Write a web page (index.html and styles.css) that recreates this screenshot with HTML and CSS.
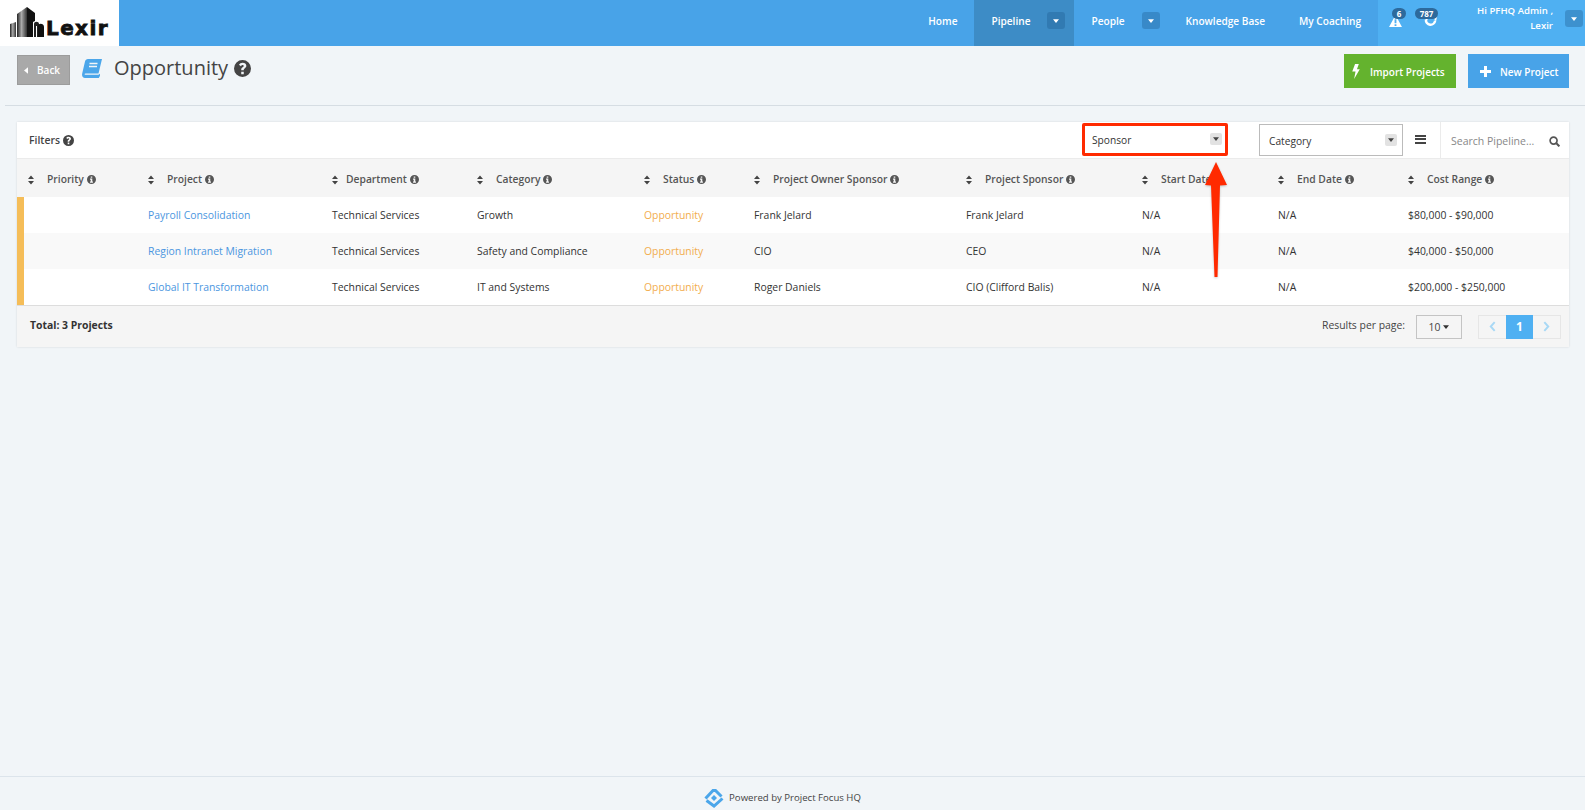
FILE: index.html
```html
<!DOCTYPE html>
<html lang="en">
<head>
<meta charset="utf-8">
<title>Opportunity</title>
<link rel="stylesheet" href="styles.css">
</head>
<body>
<svg class="defs" width="0" height="0" aria-hidden="true">
  <symbol id="i-sort" viewBox="0 0 8 12"><path d="M4 .5 7.6 4.8H.4zM4 11.500.4 7.200h7.200z"/></symbol>
  <symbol id="i-info" viewBox="0 0 16 16"><path fill-rule="evenodd" d="M8 0a8 8 0 1 0 0 16A8 8 0 0 0 8 0zM6.600 2.600h2.800v2.400H6.600zM5.400 6.400h4v5.200h1.200v2H5.400v-2h1.200V8.400H5.400z"/></symbol>
  <symbol id="i-help" viewBox="0 0 16 16"><path fill-rule="evenodd" d="M8 0a8 8 0 1 0 0 16A8 8 0 0 0 8 0zM6.800 11h2.400v2.400H6.800zM8.100 2.600c2 0 3.500 1.100 3.500 2.900 0 1.300-.7 1.900-1.500 2.400-.7.400-.9.700-.9 1.400v.4H6.800v-.6c0-1.200.5-1.800 1.300-2.300.6-.4 1-.6 1-1.200 0-.5-.4-.8-1-.8-.7 0-1.200.4-1.600 1L4.700 4.500c.7-1.200 1.800-1.900 3.400-1.900z"/></symbol>
  <symbol id="i-caret" viewBox="0 0 8 5"><path d="M0 0h8L4 5z"/></symbol>
</svg>

<header class="topnav">
  <a class="brand">
    <svg class="brand-mark" viewBox="0 0 34 31">
      <defs>
        <linearGradient id="tower" x1="0" x2="1" y1="0" y2="0"><stop offset="0" stop-color="#222"/><stop offset=".45" stop-color="#aaa"/><stop offset="1" stop-color="#333"/></linearGradient>
      </defs>
      <path fill="url(#tower)" d="M0 18l6-2v15H0z"/>
      <path fill="url(#tower)" d="M7 8 17 1v30H7z"/>
      <path fill="#111" d="M17 1l8 6v8l-2 1v15h-6z"/>
      <path fill="#222" d="M24 18c0-3 5-3 5 0v13h-2V20h-1v11h-2z"/>
      <path fill="#111" d="M28 20c0-3 6-3 6 1v10h-6z"/>
    </svg>
    <span class="brand-name">Lexir</span>
  </a>
  <nav class="nav-items">
    <a class="nav-item">Home</a>
    <a class="nav-item has-toggle is-active">Pipeline<span class="nav-toggle"><svg class="caret-sm"><use href="#i-caret"/></svg></span></a>
    <a class="nav-item has-toggle">People<span class="nav-toggle"><svg class="caret-sm"><use href="#i-caret"/></svg></span></a>
    <a class="nav-item">Knowledge Base</a>
    <a class="nav-item">My Coaching</a>
  </nav>
  <div class="nav-user">
    <span class="alert">
      <svg class="alert-icon" viewBox="0 0 14 13"><path fill="#fff" fill-rule="evenodd" d="M7 0l7 13H0zM6 4.500v4.500h2V4.500zM6 10v2h2v-2z"/></svg>
      <span class="badge badge-one">6</span>
    </span>
    <span class="alert alert-wide">
      <svg class="alert-icon" viewBox="0 0 14 13"><path fill="none" stroke="#fff" stroke-width="2.600" d="M2 5a5 5 0 0 0 10 1"/><path fill="#fff" d="M0 2l5 0-2 5zM14 2l-4 1 3 4z"/></svg>
      <span class="badge badge-two">787</span>
    </span>
    <div class="greeting">Hi PFHQ Admin ,<br>Lexir</div>
    <span class="nav-toggle nav-toggle-user"><svg class="caret-sm"><use href="#i-caret"/></svg></span>
  </div>
</header>

<section class="page-head">
  <div class="head-left">
    <a class="btn-back"><svg class="back-arrow" viewBox="0 0 5 8"><path d="M5 0v8L0 4z"/></svg>Back</a>
    <svg class="book" viewBox="0 0 20 19"><path fill="#4ba6ea" d="M6 0h14l-3.500 14.500H3.500c-1 0-1.300 1.300-.3 1.300H16.500l1.500-1v2L16.800 19H3C.7 19-.4 17 .2 14.500L3 2.500C3.300 1 4.500 0 6 0z"/><path fill="none" stroke="#f1f5f8" stroke-width="1.300" d="M7.500 4.500h8M7 7.500h8"/></svg>
    <h1 class="page-title">Opportunity</h1>
    <svg class="title-help"><use href="#i-help"/></svg>
  </div>
  <div class="head-actions">
    <a class="btn btn-green"><svg class="btn-icon bolt" viewBox="0 0 8 16"><path fill="#fff" d="M3 0h4L5 5.500h3L2 16l1.500-8H0z"/></svg>Import Projects</a>
    <a class="btn btn-blue"><svg class="btn-icon plus" viewBox="0 0 11 11"><path fill="#fff" d="M4 0h3v4h4v3H7v4H4V7H0V4h4z"/></svg>New Project</a>
  </div>
</section>

<main class="card">
  <div class="filters">
    <span class="filters-label">Filters<svg class="filters-help"><use href="#i-help"/></svg></span>
    <div class="select select-flagged"><span>Sponsor</span><span class="select-arrow"><svg class="caret-dark"><use href="#i-caret"/></svg></span></div>
    <div class="select select-plain"><span>Category</span><span class="select-arrow"><svg class="caret-dark"><use href="#i-caret"/></svg></span></div>
    <span class="menu-lines"></span>
    <div class="search">
      <span class="search-text">Search Pipeline...</span>
      <svg class="search-icon" viewBox="0 0 12 12"><circle cx="5" cy="5" r="3.800" fill="none" stroke="#555" stroke-width="1.800"/><path stroke="#555" stroke-width="2.200" d="M8 8l3.300 3.300"/></svg>
    </div>
  </div>

  <table class="grid">
    <colgroup>
      <col class="c1"><col class="c2"><col class="c3"><col class="c4"><col class="c5"><col class="c6"><col class="c7"><col class="c8"><col class="c9"><col class="c10">
    </colgroup>
    <thead>
      <tr>
        <th class="first"><svg class="sort"><use href="#i-sort"/></svg><span class="th-label">Priority</span><svg class="info"><use href="#i-info"/></svg></th>
        <th><svg class="sort"><use href="#i-sort"/></svg><span class="th-label">Project</span><svg class="info"><use href="#i-info"/></svg></th>
        <th><svg class="sort"><use href="#i-sort"/></svg><span class="th-label tight">Department</span><svg class="info"><use href="#i-info"/></svg></th>
        <th><svg class="sort"><use href="#i-sort"/></svg><span class="th-label">Category</span><svg class="info"><use href="#i-info"/></svg></th>
        <th><svg class="sort"><use href="#i-sort"/></svg><span class="th-label">Status</span><svg class="info"><use href="#i-info"/></svg></th>
        <th><svg class="sort"><use href="#i-sort"/></svg><span class="th-label">Project Owner Sponsor</span><svg class="info"><use href="#i-info"/></svg></th>
        <th><svg class="sort"><use href="#i-sort"/></svg><span class="th-label">Project Sponsor</span><svg class="info"><use href="#i-info"/></svg></th>
        <th><svg class="sort"><use href="#i-sort"/></svg><span class="th-label">Start Date</span><svg class="info"><use href="#i-info"/></svg></th>
        <th><svg class="sort"><use href="#i-sort"/></svg><span class="th-label">End Date</span><svg class="info"><use href="#i-info"/></svg></th>
        <th><svg class="sort"><use href="#i-sort"/></svg><span class="th-label">Cost Range</span><svg class="info"><use href="#i-info"/></svg></th>
      </tr>
    </thead>
    <tbody>
      <tr>
        <td class="bar"></td><td><a class="link">Payroll Consolidation</a></td><td>Technical Services</td><td>Growth</td><td class="status">Opportunity</td><td>Frank Jelard</td><td>Frank Jelard</td><td>N/A</td><td>N/A</td><td>$80,000 - $90,000</td>
      </tr>
      <tr>
        <td class="bar"></td><td><a class="link">Region Intranet Migration</a></td><td>Technical Services</td><td>Safety and Compliance</td><td class="status">Opportunity</td><td>CIO</td><td>CEO</td><td>N/A</td><td>N/A</td><td>$40,000 - $50,000</td>
      </tr>
      <tr>
        <td class="bar"></td><td><a class="link">Global IT Transformation</a></td><td>Technical Services</td><td>IT and Systems</td><td class="status">Opportunity</td><td>Roger Daniels</td><td>CIO (Clifford Balis)</td><td>N/A</td><td>N/A</td><td>$200,000 - $250,000</td>
      </tr>
    </tbody>
  </table>

  <div class="card-foot">
    <strong class="total">Total: 3 Projects</strong>
    <span class="per-page">Results per page:</span>
    <span class="per-select">10<svg class="caret-xs"><use href="#i-caret"/></svg></span>
    <div class="pager">
      <span class="page-btn"><svg class="chev" viewBox="0 0 8 12"><path d="M6.500 1 2 6l4.500 5"/></svg></span>
      <span class="page-btn is-current">1</span>
      <span class="page-btn"><svg class="chev" viewBox="0 0 8 12"><path d="M1.500 1 6 6l-4.500 5"/></svg></span>
    </div>
  </div>
</main>

<footer class="page-foot">
  <svg class="foot-logo" viewBox="0 0 20 20"><g fill="none" stroke="#4ba6ea" stroke-width="3"><path d="M1.500 10.500 9 2.500h2.500l6 6"/><path d="M2.500 12.500l7.500 5.500 8.500-7.500"/></g><path fill="#4ba6ea" d="M10 7l3 3-3 3-3-3z"/></svg>
  <span>Powered by Project Focus HQ</span>
</footer>

<svg class="arrow" viewBox="0 0 30 122"><path fill="#ff2a00" d="M15 1 26 24l-7 .5L16.500 116h-3L10 24.500 4 24z"/></svg>
</body>
</html>
```

FILE: styles.css
```css
* { box-sizing: border-box; }
html, body { height: 100%; }
body {
  margin: 0;
  min-height: 810px;
  display: flex;
  flex-direction: column;
  position: relative;
  overflow: hidden;
  background: #f1f5f8;
  color: #333;
  font-family: "Open Sans", "Liberation Sans", sans-serif;
  font-size: 10.4px;
}
a { color: inherit; text-decoration: none; }
.defs { position: absolute; }

/* top navigation */
.topnav { display: flex; height: 46px; background: #48a3e8; color: #fff; font-weight: 600; font-size: 10.1px; flex: none; }
.brand { width: 119px; background: #fff; display: flex; align-items: flex-end; padding: 0 0 9px 10px; }
.brand-mark { width: 34px; height: 31px; display: block; }
.brand-name {
  font-family: "DejaVu Sans", sans-serif;
  font-weight: 700;
  font-size: 20px;
  line-height: 17px;
  letter-spacing: 1.400px;
  color: #111;
  -webkit-text-stroke: .8px #111;
  margin-left: 2px;
}
.nav-items { display: flex; margin-left: auto; }
.nav-item { display: flex; align-items: flex-start; padding: 14px 17px 0; }
.nav-item.has-toggle { padding-right: 9px; }
.nav-item.is-active { background: #3d8cc6; }
.nav-toggle {
  width: 18px; height: 17px; margin: -2px 0 0 17px; border-radius: 3px;
  background: rgba(30, 90, 140, .35);
  display: flex; align-items: center; justify-content: center;
}
.caret-sm { width: 6px; height: 4px; fill: #fff; }
.nav-user { width: 207px; flex: none; background: #4fb0f2; display: flex; position: relative; align-items: flex-start; }
.alert { position: relative; width: 14px; height: 13px; margin: 15px 0 0 11px; }
.alert-wide { margin-left: 21px; }
.alert-icon { width: 13px; height: 12px; display: block; }
.badge {
  position: absolute; top: -7px; height: 11px; border-radius: 6px;
  background: #2d6a9c; color: #fff; font-size: 8px; line-height: 11px; font-weight: 700; text-align: center;
}
.badge-one { left: 3px; width: 14px; }
.badge-two { left: -9px; width: 23px; }
.greeting { position: absolute; right: 32px; top: 4px; text-align: right; line-height: 14.500px; font-size: 9.600px; }
.nav-toggle-user { position: absolute; right: 2px; top: 10px; margin: 0; width: 18px; }

/* page header */
.page-head {
  display: flex; justify-content: space-between; align-items: flex-start;
  margin-left: 5px; padding: 8px 16px 17px 12px;
  border-bottom: 1px solid #d6dde3; flex: none;
}
.head-left { display: flex; align-items: center; height: 30px; margin-top: 1px; }
.btn-back {
  width: 53px; height: 30px; background: #a9a9a9; border: 1px solid #9c9c9c; color: #fff; font-weight: 600; font-size: 10px;
  display: flex; align-items: center; padding-left: 6px;
}
.back-arrow { width: 4px; height: 7px; fill: #fff; margin-right: 9px; }
.book { width: 20px; height: 19px; margin: 0 0 4px 12px; }
.page-title { margin: 0 0 4px 12px; font-size: 20px; font-weight: 400; color: #444; line-height: 30px; }
.title-help { width: 17px; height: 17px; margin: 0 0 4px 6px; fill: #444; }
.head-actions { display: flex; gap: 12px; }
.btn { height: 34px; color: #fff; font-weight: 600; font-size: 10px; display: flex; align-items: center; padding-top: 1px; }
.btn-green { width: 112px; background: #64b32e; padding-left: 8px; }
.btn-blue { width: 101px; background: #48a3e8; padding-left: 12px; }
.btn-icon { flex: none; }
.bolt { width: 8px; height: 15px; margin-right: 10px; }
.plus { width: 11px; height: 11px; margin-right: 9px; }

/* card */
.card { margin: 16px 16px 0 17px; background: #fff; box-shadow: 0 0 2px rgba(0, 0, 0, .12); flex: none; }
.filters { display: flex; align-items: center; height: 37px; border-bottom: 1px solid #ebebeb; }
.filters-label { display: flex; align-items: center; padding-left: 12px; font-weight: 600; color: #444; margin: 0 auto 0 0; }
.filters-help { width: 11px; height: 11px; fill: #444; margin-left: 3px; }
.select { display: flex; align-items: center; justify-content: space-between; font-size: 10.200px; }
.select > span:first-child { padding-top: 2px; }
.select-flagged { width: 146px; height: 33px; border: 3px solid #ff2a00; border-radius: 2px; padding: 0 3px 0 7px; margin-top: -2px; }
.select-plain { width: 144px; height: 32px; border: 1px solid #bbb; margin-left: 31px; padding: 0 5px 0 9px; }
.select-arrow { width: 12px; height: 12px; border-radius: 2px; background: #e2e2e2; display: flex; align-items: center; justify-content: center; }
.caret-dark { width: 6px; height: 4px; fill: #444; }
.menu-lines { width: 11px; height: 9px; margin: -2px 0 0 12px; border-top: 2px solid #444; border-bottom: 2px solid #444; position: relative; }
.menu-lines::after { content: ""; position: absolute; left: 0; right: 0; top: 1.500px; height: 2px; background: #444; }
.search { width: 129px; height: 36px; margin-left: 14px; border-left: 1px solid #ebebeb; display: flex; align-items: center; justify-content: space-between; padding: 2px 9px 0 10px; }
.search-text { color: #888; font-size: 10.500px; }
.search-icon { width: 11px; height: 11px; }

/* table */
.grid { width: 1552px; table-layout: fixed; border-collapse: separate; border-spacing: 0; }
.c1 { width: 131px; } .c2 { width: 184px; } .c3 { width: 145px; } .c4 { width: 167px; } .c5 { width: 110px; }
.c6 { width: 212px; } .c7 { width: 176px; } .c8 { width: 136px; } .c9 { width: 130px; } .c10 { width: 161px; }
th { height: 38px; padding: 2px 0 0; background: #f5f5f5; text-align: left; font-weight: 600; color: #555; font-size: 10.300px; white-space: nowrap; }
th.first { padding-left: 11px; }
.sort { width: 8px; height: 10px; margin-left: -1px; fill: #444; vertical-align: -1.500px; }
.th-label { margin-left: 12px; }
.th-label.tight { margin-left: 7px; }
.info { width: 9px; height: 9px; fill: #555; margin-left: 3px; vertical-align: -1px; }
td { height: 36px; padding: 0; white-space: nowrap; color: #333; }
tbody tr:nth-child(even) td { background: #f9f9f9; }
tbody td.bar { background: inherit; border-left: 7px solid #f5bd58; }
.link { color: #4b96e0; }
td.status { color: #f2ad4e; }

/* card footer */
.card-foot { display: flex; align-items: center; height: 42px; background: #f5f5f5; border-top: 1px solid #ddd; padding: 0 8px 0 13px; }
.total { font-weight: 700; color: #333; margin: 0 auto 3px 0; }
.per-page { color: #444; margin: 0 11px 3px 0; }
.per-select { width: 46px; height: 24px; border: 1px solid #c4c4c4; display: flex; align-items: center; justify-content: center; color: #444; margin-right: 16px; }
.caret-xs { width: 6px; height: 4px; fill: #333; margin-left: 3px; }
.pager { display: flex; height: 24px; border: 1px solid #e6e6e6; width: 83px; }
.page-btn { flex: 1; display: flex; align-items: center; justify-content: center; }
.page-btn.is-current { flex: none; width: 27px; margin: -1px 0; background: #4fb0f2; color: #fff; font-weight: 700; font-size: 12px; }
.chev { width: 7px; height: 11px; fill: none; stroke: #a8d8f5; stroke-width: 2.200; }

/* page footer */
.page-foot { margin-top: auto; height: 34px; border-top: 1px solid #dce4eb; display: flex; align-items: center; justify-content: center; gap: 5px; color: #444; font-size: 9.600px; padding: 8px 20px 0 0; flex: none; }
.foot-logo { width: 20px; height: 20px; }

/* annotation */
.arrow { position: absolute; left: 1201px; top: 161px; width: 30px; height: 122px; filter: drop-shadow(0 1px 1px rgba(0, 0, 0, .2)); }
```
